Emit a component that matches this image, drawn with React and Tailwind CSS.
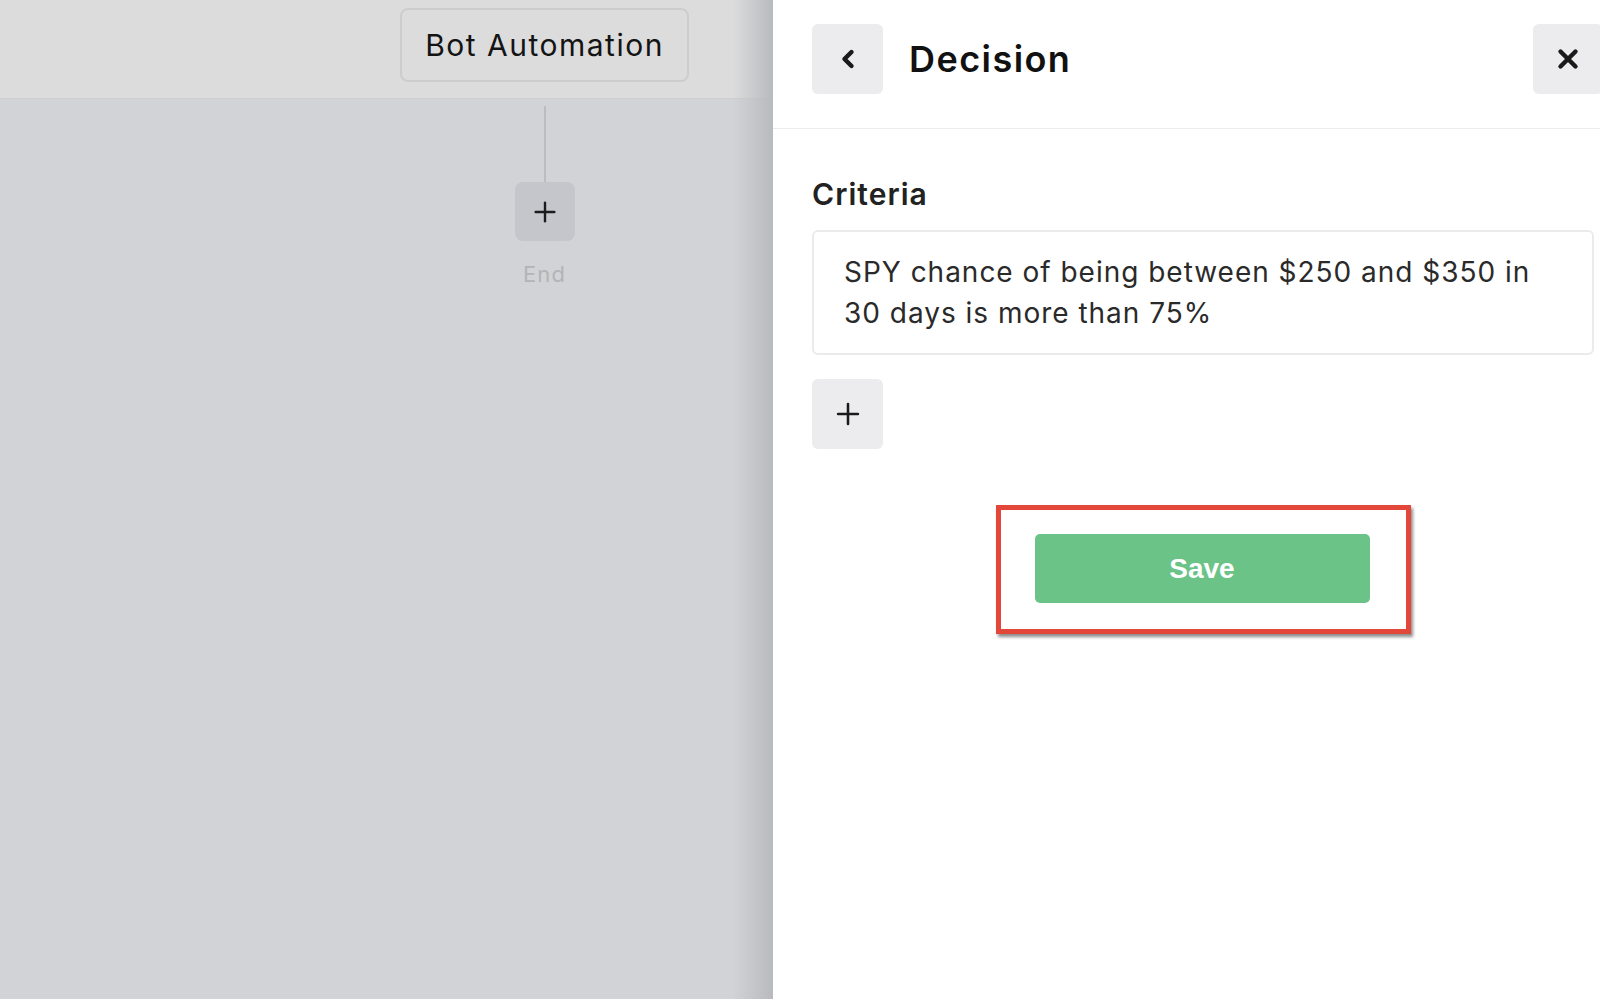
import React from 'react';
import { ChevronLeft, X, Plus } from 'lucide-react';

const font = { fontFamily: '"Inter", "Noto Sans", sans-serif' };

const Canvas = () => (
    <div className="w-[773px] shrink-0 h-full bg-[#d2d3d6] relative">
        <div className="h-[99px] bg-[#dcdcdd] border-b border-[#cfcfd1] pt-[8px] pl-[400px]">
            <div className="w-[289px] h-[74px] rounded-[8px] border-2 border-[#cdcdcf] flex items-center justify-center text-[30px] tracking-[0.05em] text-[#141414]">
                Bot Automation
            </div>
        </div>
        <div className="ml-[400px] w-[289px] flex flex-col items-center">
            <div className="w-[2px] h-[76px] bg-[#bcbdc1] mt-[7px]"></div>
            <div className="w-[60px] h-[59px] rounded-[8px] bg-[#c5c6cb] flex items-center justify-center">
                <Plus className="w-[32px] h-[32px] text-[#1c1c1e]" strokeWidth={1.8} />
            </div>
            <div className="mt-[17px] text-[22px] tracking-[0.05em] text-[#b3b4b7]">End</div>
        </div>
        <div className="absolute top-0 right-0 h-full w-[40px] bg-gradient-to-r from-transparent to-[#b9babd]"></div>
    </div>
);

const Panel = () => (
    <div className="w-[860px] shrink-0 h-full bg-white">
        <div className="h-[129px] border-b border-[#ececef] flex items-start pt-[24px] pl-[39px] pr-[30px]">
            <button className="w-[71px] h-[70px] rounded-[6px] bg-[#ececef] flex items-center justify-center">
                <ChevronLeft className="w-[28px] h-[28px] text-[#1a1a1a]" strokeWidth={3.8} />
            </button>
            <h1 className="ml-[26px] h-[70px] flex items-center text-[36px] tracking-[0.04em] font-semibold text-[#111]">Decision</h1>
            <button className="ml-auto w-[70px] h-[70px] rounded-[6px] bg-[#ececef] flex items-center justify-center">
                <X className="w-[30px] h-[30px] text-[#1a1a1a]" strokeWidth={3.5} />
            </button>
        </div>
        <div className="px-[39px] w-[860px]">
            <div className="w-[782px]">
                <div className="mt-[46px] text-[30px] tracking-[0.035em] font-semibold text-[#222] leading-[38px]">Criteria</div>
                <div className="mt-[17px] h-[125px] rounded-[6px] border-2 border-[#ebebed] pl-[30px] pr-[40px] pt-[20px] text-[28px] tracking-[0.035em] leading-[41px] text-[#2a2a2a]">
                    SPY chance of being between $250 and $350 in 30 days is more than 75%
                </div>
                <button className="mt-[24px] w-[71px] h-[70px] rounded-[6px] bg-[#ececef] flex items-center justify-center">
                    <Plus className="w-[34px] h-[34px] text-[#1a1a1a]" strokeWidth={1.8} />
                </button>
                <div className="mt-[56px] flex justify-center">
                    <div className="border-[5px] border-[#e2473a] bg-white pl-[34px] pr-[36px] pt-[24px] pb-[26px] shadow-[2px_3px_3px_rgba(0,0,0,0.45)]">
                        <button
                            className="w-[335px] h-[69px] rounded-[5px] bg-[#6bc387] text-white text-[28px] font-bold"
                            style={{ fontFamily: '"Liberation Sans", Arial, sans-serif' }}
                        >
                            Save
                        </button>
                    </div>
                </div>
            </div>
        </div>
    </div>
);

export default function App() {
    return (
        <div className="w-screen h-screen overflow-hidden flex" style={font}>
            <Canvas />
            <Panel />
        </div>
    );
}
